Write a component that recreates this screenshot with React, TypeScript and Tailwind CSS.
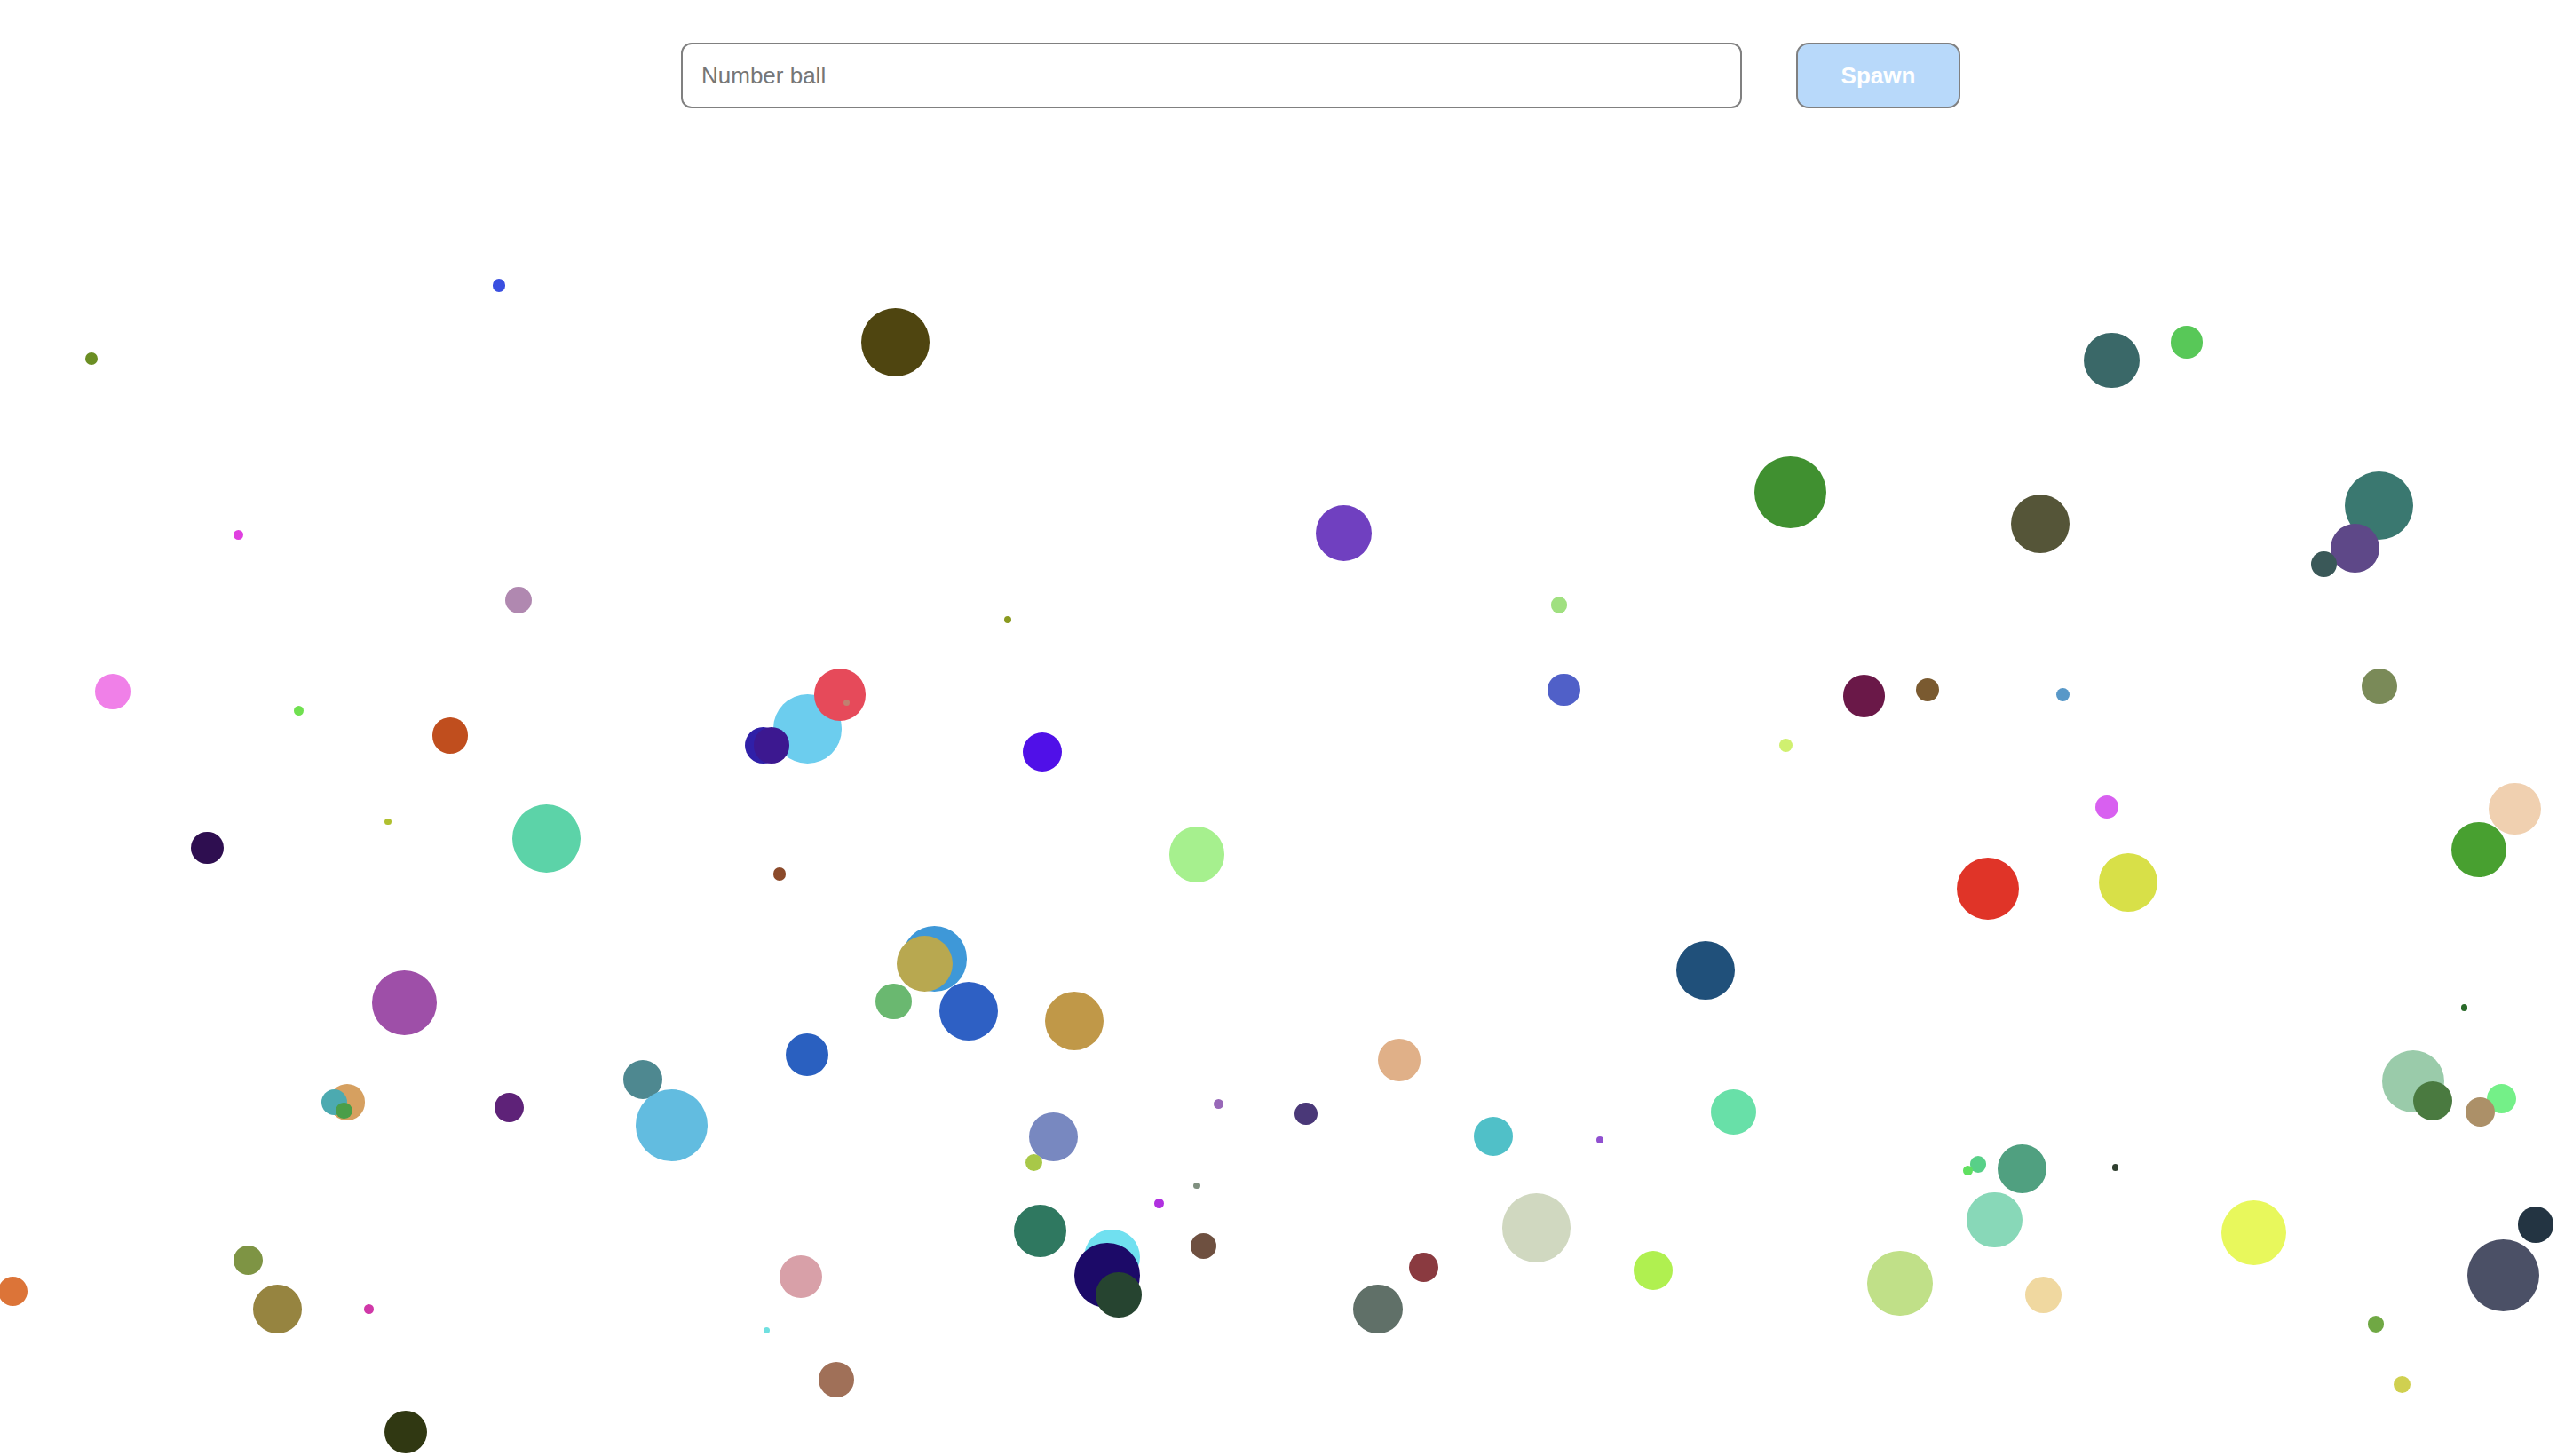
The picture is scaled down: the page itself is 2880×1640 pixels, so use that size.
const S = 2880 / 1568;

// [x, y, r, colour] in reference preview coordinates
const balls: [number, number, number, string][] = [
  [306, 175, 4, "#3a4fe0"],
  [56, 220, 4, "#6b8e23"],
  [549, 210, 21, "#4f4510"],
  [146, 328, 3, "#e040e0"],
  [318, 368, 8, "#b088b0"],
  [69, 424, 11, "#f080e8"],
  [183, 436, 3, "#70e050"],
  [276, 451, 11, "#c04e1e"],
  [238, 504, 2, "#b0c030"],
  [127, 520, 10, "#2e0e50"],
  [335, 514, 21, "#5cd3a8"],
  [478, 536, 4, "#8b4a2a"],
  [248, 615, 20, "#9e4fa8"],
  [213, 676, 11, "#d6a060"],
  [205, 676, 8, "#4caab0"],
  [211, 681, 5, "#4a9e48"],
  [312, 679, 9, "#5e2278"],
  [394, 662, 12, "#4e8890"],
  [412, 690, 22, "#62bce0"],
  [495, 647, 13, "#2a60c0"],
  [548, 614, 11, "#6ab870"],
  [573, 588, 20, "#3e98d8"],
  [567, 591, 17, "#b8a850"],
  [594, 620, 18, "#2e60c4"],
  [659, 626, 18, "#c09848"],
  [646, 697, 15, "#7888c0"],
  [634, 713, 5, "#a8c848"],
  [495, 447, 21, "#6ccdee"],
  [515, 426, 16, "#e64a5a"],
  [519, 431, 2, "#c08070"],
  [468, 457, 11, "#3020a8"],
  [473, 457, 11, "#3c1890"],
  [639, 461, 12, "#5010e8"],
  [618, 380, 2, "#8a9a20"],
  [734, 524, 17, "#a6f08e"],
  [824, 327, 17, "#7040c0"],
  [956, 371, 5, "#a0e080"],
  [959, 423, 10, "#5060c8"],
  [1098, 302, 22, "#409030"],
  [1251, 321, 18, "#555538"],
  [1295, 221, 17, "#3a6868"],
  [1341, 210, 10, "#58c858"],
  [1459, 310, 21, "#3a7870"],
  [1444, 336, 15, "#5e4888"],
  [1425, 346, 8, "#3a5858"],
  [1143, 427, 13, "#6a1848"],
  [1182, 423, 7, "#7a5a30"],
  [1265, 426, 4, "#5898c8"],
  [1095, 457, 4, "#d0f070"],
  [1459, 421, 11, "#7a8a58"],
  [1292, 495, 7, "#d860f0"],
  [1542, 496, 16, "#f0d0b0"],
  [1520, 521, 17, "#48a030"],
  [1219, 545, 19, "#e03428"],
  [1305, 541, 18, "#d8e048"],
  [1046, 595, 18, "#20507a"],
  [858, 650, 13, "#e0b088"],
  [747, 677, 3, "#9868b8"],
  [801, 683, 7, "#4a3878"],
  [916, 697, 12, "#50c0c8"],
  [981, 699, 2, "#9050d0"],
  [1063, 682, 14, "#68e0a8"],
  [734, 727, 2, "#809080"],
  [711, 738, 3, "#b030e0"],
  [638, 755, 16, "#2f7860"],
  [682, 771, 17, "#70e0f0"],
  [679, 782, 20, "#1c0a68"],
  [686, 794, 14, "#264430"],
  [738, 764, 8, "#6e5040"],
  [873, 777, 9, "#8a3a40"],
  [845, 803, 15, "#607068"],
  [942, 753, 21, "#d0d8c0"],
  [1014, 779, 12, "#b0f050"],
  [1165, 787, 20, "#c0e088"],
  [1253, 794, 11, "#f0d8a0"],
  [1223, 748, 17, "#88d8b8"],
  [1240, 717, 15, "#50a080"],
  [1213, 714, 5, "#58d088"],
  [1207, 718, 3, "#60e060"],
  [1297, 716, 2, "#304030"],
  [1382, 756, 20, "#e8f85c"],
  [1480, 663, 19, "#9acbaa"],
  [1492, 675, 12, "#4a7a40"],
  [1534, 674, 9, "#74f088"],
  [1521, 682, 9, "#ac9068"],
  [1511, 618, 2, "#2a6a2a"],
  [1555, 751, 11, "#233442"],
  [1535, 782, 22, "#4b5066"],
  [1457, 812, 5, "#70a844"],
  [1473, 849, 5, "#d0d050"],
  [8, 792, 9, "#dc7438"],
  [152, 773, 9, "#7e9444"],
  [170, 803, 15, "#968440"],
  [226, 803, 3, "#d038a8"],
  [249, 878, 13, "#303812"],
  [491, 783, 13, "#d8a0a8"],
  [470, 816, 2, "#70e0e0"],
  [513, 846, 11, "#a07058"],
];

export default function App() {
  return (
    <div className="relative h-[1640px] w-full overflow-hidden bg-white font-['Liberation_Sans',Arial,sans-serif]">
      <div className="flex items-center gap-[61px] pl-[767px] pt-[48px]">
        <input
          type="text"
          placeholder="Number ball"
          className="h-[74px] w-[1195px] rounded-[12px] border-2 border-[#808080] bg-white pl-[21px] pr-4 text-[26px] text-[#333] outline-none placeholder:text-[#767676]"
        />
        <button className="h-[74px] w-[185px] rounded-[14px] border-2 border-[#808080] bg-[#b8d9fa] text-[26px] font-bold text-white">
          Spawn
        </button>
      </div>
      {balls.map(([x, y, r, c], i) => (
        <div
          key={i}
          className="absolute rounded-full blur-[0.6px]"
          style={{
            left: (x - r) * S,
            top: (y - r) * S,
            width: 2 * r * S,
            height: 2 * r * S,
            background: c,
          }}
        />
      ))}
    </div>
  );
}
